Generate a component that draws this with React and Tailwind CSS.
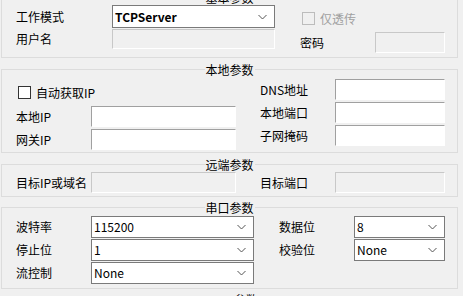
import React from 'react';

const font = { fontFamily: '"Noto Sans CJK SC", "Microsoft YaHei", sans-serif' };

const Chevron = () => (
  <svg width="9" height="5" viewBox="0 0 9 5" className="absolute right-[7px] top-1/2 -translate-y-1/2">
    <path d="M0.5 0.5 L4.5 4.5 L8.5 0.5" fill="none" stroke="#555" strokeWidth="1" />
  </svg>
);

const Combo = ({ value, w, h = 'h-[22px]', bold }) => (
  <div className={`relative ${w} ${h} bg-white border border-[#7a7a7a] flex items-center pl-[2px] ${bold ? 'font-semibold' : ''}`}>
    <span className="leading-none">{value}</span>
    <Chevron />
  </div>
);

const Edit = ({ w, disabled }) => (
  <div
    className={`${w} h-[21px] border-t border-l border-t-[#a0a0a0] border-l-[#a0a0a0] border-r border-b border-r-white border-b-white ${
      disabled ? 'bg-[#f0f0f0] border-t-[#c8c8c8] border-l-[#c8c8c8]' : 'bg-white'
    }`}
  />
);

const Check = ({ label, disabled }) => (
  <div className="flex items-center h-[13px] ml-[2px]">
    <div
      className={`w-[13px] h-[13px] border ${
        disabled ? 'border-[#bcbcbc] bg-[#f0f0f0]' : 'border-[#333] bg-white'
      }`}
    />
    <span className={`ml-[5px] leading-none ${disabled ? 'text-[#a0a0a0]' : 'text-black'}`}>{label}</span>
  </div>
);

const Group = ({ title, h, className = '', children }) => (
  <div className={`relative ml-[1px] w-[457px] ${h} border border-[#dcdcdc] ${className}`}>
    <span className="absolute left-1/2 top-0 -translate-x-1/2 -translate-y-1/2 bg-[#f0f0f0] px-[1px] leading-none whitespace-nowrap">
      {title}
    </span>
    {children}
  </div>
);

const Row = ({ label, lw, children, className = '' }) => (
  <div className={`flex items-center ${className}`}>
    <span className={`${lw} leading-none whitespace-nowrap`}>{label}</span>
    {children}
  </div>
);

export default function App() {
  return (
    <div className="w-[463px] h-[296px] overflow-hidden bg-[#f0f0f0] text-[12px] text-black" style={font}>
      {/* 基本参数 */}
      <Group title="基本参数" h="h-[61px]" className="-mt-[3px]">
        <div className="flex">
          <div className="w-[298px] pl-[14px] pt-[7px]">
            <Row label="工作模式" lw="w-[96px]">
              <Combo value="TCPServer" w="w-[163px]" h="h-[23px]" bold />
            </Row>
            <Row label="用户名" lw="w-[96px]" className="mt-[1px]">
              <Edit w="w-[163px] !h-[20px]" disabled />
            </Row>
          </div>
          <div className="pt-[14px]">
            <Check label="仅透传" disabled />
            <Row label="密码" lw="w-[75px]" className="mt-[7px]">
              <Edit w="w-[70px]" disabled />
            </Row>
          </div>
        </div>
      </Group>

      {/* 本地参数 */}
      <Group title="本地参数" h="h-[84px]" className="mt-[11px]">
        <div className="flex">
          <div className="w-[258px] pl-[14px] pt-[16px]">
            <Check label="自动获取IP" />
            <Row label="本地IP" lw="w-[75px]" className="mt-[7px]">
              <Edit w="w-[145px]" />
            </Row>
            <Row label="网关IP" lw="w-[75px]" className="mt-[2px]">
              <Edit w="w-[145px]" />
            </Row>
          </div>
          <div className="pt-[9px] flex flex-col gap-[2px]">
            <Row label="DNS地址" lw="w-[75px]">
              <Edit w="w-[110px]" />
            </Row>
            <Row label="本地端口" lw="w-[75px]">
              <Edit w="w-[110px]" />
            </Row>
            <Row label="子网掩码" lw="w-[75px]">
              <Edit w="w-[110px]" />
            </Row>
          </div>
        </div>
      </Group>

      {/* 远端参数 */}
      <Group title="远端参数" h="h-[33px]" className="mt-[11px]">
        <div className="flex pt-[7px]">
          <div className="w-[258px] pl-[14px]">
            <Row label="目标IP或域名" lw="w-[75px]">
              <Edit w="w-[145px]" disabled />
            </Row>
          </div>
          <Row label="目标端口" lw="w-[75px]">
            <Edit w="w-[110px]" disabled />
          </Row>
        </div>
      </Group>

      {/* 串口参数 */}
      <Group title="串口参数" h="h-[82px]" className="mt-[10px]">
        <div className="flex pt-[8px]">
          <div className="w-[277px] pl-[14px] flex flex-col gap-[1px]">
            <Row label="波特率" lw="w-[75px]">
              <Combo value="115200" w="w-[163px]" />
            </Row>
            <Row label="停止位" lw="w-[75px]">
              <Combo value="1" w="w-[163px]" />
            </Row>
            <Row label="流控制" lw="w-[75px]">
              <Combo value="None" w="w-[163px]" />
            </Row>
          </div>
          <div className="flex flex-col gap-[1px]">
            <Row label="数据位" lw="w-[75px]">
              <Combo value="8" w="w-[91px]" />
            </Row>
            <Row label="校验位" lw="w-[75px]">
              <Combo value="None" w="w-[91px]" />
            </Row>
          </div>
        </div>
      </Group>

      {/* 下一组 */}
      <Group title="MQTT参数" h="h-[40px]" className="mt-[10px]" />
    </div>
  );
}
